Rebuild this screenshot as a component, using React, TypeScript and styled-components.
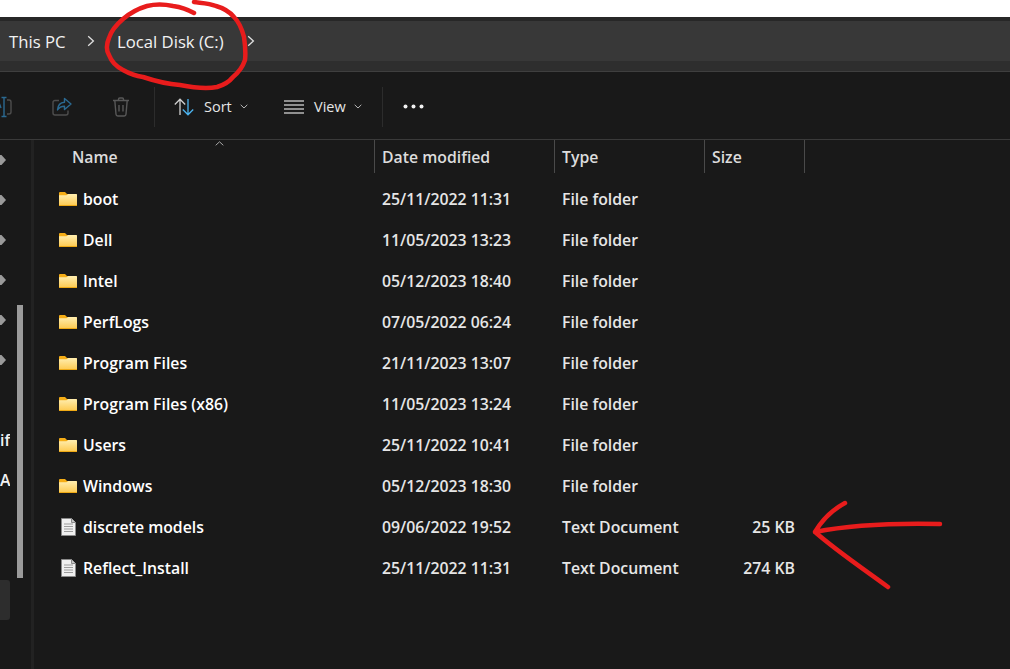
import React from 'react';
import styled, { createGlobalStyle } from 'styled-components';

const GlobalStyle = createGlobalStyle`
  html, body {
    margin: 0;
    background: #ffffff;
    overflow: hidden;
  }
`;

// Window frame
const Page = styled.div`
  position: relative;
  width: 1010px;
  height: 669px;
  overflow: hidden;
  padding-top: 17px;
  box-sizing: border-box;
  font-family: 'Open Sans', 'Noto Sans', sans-serif;
`;

const Explorer = styled.div`
  height: 652px;
  background: #191919;
  display: flex;
  flex-direction: column;
`;

const TitleEdge = styled.div`
  height: 4px;
  background: #272727;
`;

const AddressBar = styled.div`
  height: 40px;
  background: #383838;
  display: flex;
  align-items: center;
  color: #f2f2f2;
  font-size: 16.7px;
`;

const AddressEdge = styled.div`
  height: 10px;
  background: #2e2e2e;
  border-bottom: 1px solid #3f3f3f;
`;

const Crumb = styled.span<{ $width: number; $left: number }>`
  width: ${(p) => p.$width}px;
  margin-left: ${(p) => p.$left}px;
  white-space: nowrap;
  flex: none;
`;

// Toolbar
const Toolbar = styled.div`
  height: 68px;
  flex: none;
  display: flex;
  align-items: center;
  padding-top: 2px;
  border-bottom: 1px solid #3a3a3a;
  box-sizing: border-box;
  color: #e6e6e6;
  font-size: 14.5px;
`;

const ClippedIcon = styled.div`
  width: 12px;
  height: 24px;
  overflow: hidden;
  display: flex;
  justify-content: flex-end;
  margin-right: 40px;
  flex: none;
`;

const IconSlot = styled.div<{ $right: number }>`
  display: flex;
  align-items: center;
  margin-right: ${(p) => p.$right}px;
  flex: none;
`;

const ToolDivider = styled.div`
  width: 1px;
  height: 40px;
  background: #2c2c2c;
  flex: none;
`;

const MenuButton = styled.div<{ $left: number; $width: number }>`
  display: flex;
  align-items: center;
  margin-left: ${(p) => p.$left}px;
  width: ${(p) => p.$width}px;
  flex: none;
`;

const MenuLabel = styled.span<{ $width: number }>`
  margin-left: 10px;
  width: ${(p) => p.$width}px;
`;

// Body
const Body = styled.div`
  flex: 1;
  display: flex;
  min-height: 0;
`;

const Sidebar = styled.div`
  position: relative;
  width: 31px;
  flex: none;
  border-right: 3px solid #222222;
`;

const SideRow = styled.div<{ $selected?: boolean }>`
  height: 40px;
  width: 10px;
  display: flex;
  align-items: center;
  color: #f2f2f2;
  font-size: 15.8px;
  font-weight: 600;
  overflow: hidden;
  border-radius: 0 3px 3px 0;
  background: ${(p) => (p.$selected ? '#2d2d2d' : 'transparent')};
`;

const SideScroll = styled.div`
  position: absolute;
  left: 17px;
  top: 165px;
  width: 6px;
  height: 273px;
  background: #9b9b9b;
`;

const Main = styled.div`
  flex: 1;
  min-width: 0;
`;

const Columns = styled.div`
  display: grid;
  grid-template-columns: 340px 180px 150px 101px;
`;

const HeaderRow = styled(Columns)`
  height: 33px;
  margin-bottom: 5px;
  color: #dcdcdc;
  font-size: 15.8px;
  font-weight: 600;
`;

const HeaderCell = styled.div<{ $last?: boolean }>`
  position: relative;
  display: flex;
  align-items: center;
  padding-left: 7px;
  border-left: 1px solid #4a4a4a;
  ${(p) => (p.$last ? 'border-right: 1px solid #4a4a4a;' : '')}
`;

const NameHeader = styled.div`
  position: relative;
  display: flex;
  align-items: center;
  padding-left: 38px;
`;

const SortCaret = styled.svg`
  position: absolute;
  left: 181px;
  top: 1px;
`;

const FileRow = styled(Columns)`
  height: 41px;
  align-items: center;
  color: #e6e6e6;
  font-size: 15.8px;
  font-weight: 600;
`;

const NameCell = styled.div`
  display: flex;
  align-items: center;
  padding-left: 25px;
  color: #ffffff;
  white-space: nowrap;
`;

const FileIconSlot = styled.div`
  width: 24px;
  flex: none;
  display: flex;
  align-items: center;
`;

const DateCell = styled.div`
  padding-left: 8px;
  white-space: nowrap;
`;

const SizeCell = styled.div`
  text-align: right;
  padding-right: 10px;
`;

// Hand drawn marks over the screenshot
const Scribble = styled.svg`
  position: absolute;
  left: 0;
  top: 0;
  pointer-events: none;
`;

const Chevron = () => (
  <svg width="8" height="12" viewBox="0 0 8 12" fill="none">
    <path d="M1.2 1.2 6.4 6l-5.2 4.8" stroke="#e0e0e0" strokeWidth="1.3" />
  </svg>
);

const SmallCaret = () => (
  <svg width="8" height="5" viewBox="0 0 8 5" fill="none">
    <path d="M.7.8 4 4 7.3.8" stroke="#b5b5b5" strokeWidth="1" />
  </svg>
);

const SideArrow = () => (
  <svg width="6" height="10" viewBox="0 0 6 10" style={{ flex: 'none' }}>
    <path d="M0 0h1.500L6 5 1.500 10H0z" fill="#9a9a9a" />
  </svg>
);

const RenameIcon = () => (
  <svg width="22" height="24" viewBox="0 0 22 24" fill="none" style={{ flex: 'none' }}>
    <path d="M17 5h2a2 2 0 0 1 2 2v10a2 2 0 0 1-2 2h-2" stroke="#4d4d4d" strokeWidth="1.4" />
    <path d="M14 2.500v19M11.500 2.500h5M11.500 21.500h5" stroke="#2b6a92" strokeWidth="1.4" />
    <path d="M7 16l2.500-7 1.500 4" stroke="#2b6a92" strokeWidth="1.4" />
  </svg>
);

const ShareIcon = () => (
  <svg width="20" height="20" viewBox="0 0 20 20" fill="none">
    <path d="M7 3.500H3a2 2 0 0 0-2 2V16a2 2 0 0 0 2 2h11a2 2 0 0 0 2-2v-2.500" stroke="#4d4d4d" strokeWidth="1.400" />
    <path d="M12.500 1.500 19 7l-6.500 5.500V9.200C9 9.200 7 10.500 5.500 13c.3-4.500 3-7.400 7-7.700z" stroke="#2b6a92" strokeWidth="1.400" strokeLinejoin="round" />
  </svg>
);

const TrashIcon = () => (
  <svg width="18" height="20" viewBox="0 0 18 20" fill="none">
    <path d="M1 3.500h16M6.500 3.500V2.200A1.200 1.200 0 0 1 7.700 1h2.600a1.200 1.200 0 0 1 1.200 1.200v1.300M2.800 3.500 4 17.300A1.800 1.800 0 0 0 5.800 19h6.400a1.800 1.800 0 0 0 1.800-1.700l1.200-13.800M7 8v6.500M11 8v6.500" stroke="#585858" strokeWidth="1.400" />
  </svg>
);

const SortIcon = () => (
  <svg width="20" height="18" viewBox="0 0 20 18" fill="none">
    <path d="M6 17V1.500M.8 6.500 6 1.200l5.200 5.300" stroke="#d0d0d0" strokeWidth="1.300" />
    <path d="M14 1v15.500M8.800 11.500 14 16.800l5.200-5.300" stroke="#4cb4f0" strokeWidth="1.300" />
  </svg>
);

const ViewIcon = () => (
  <svg width="20" height="14" viewBox="0 0 20 14" fill="none">
    <path d="M0 1h20M0 5h20M0 9h20M0 13h20" stroke="#b8b8b8" strokeWidth="1.300" />
  </svg>
);

const MoreIcon = () => (
  <svg width="21" height="5" viewBox="0 0 21 5">
    <circle cx="2.500" cy="2.500" r="2" fill="#f2f2f2" />
    <circle cx="10.500" cy="2.500" r="2" fill="#f2f2f2" />
    <circle cx="18.500" cy="2.500" r="2" fill="#f2f2f2" />
  </svg>
);

const FolderIcon = () => (
  <svg width="18" height="14" viewBox="0 0 18 14">
    <defs>
      <linearGradient id="folderBody" x1="0" y1="0" x2="0" y2="1">
        <stop offset="0" stopColor="#ffeeb0" />
        <stop offset="1" stopColor="#fdc94e" />
      </linearGradient>
    </defs>
    <path d="M0 1a1 1 0 0 1 1-1h5l2 2h9a1 1 0 0 1 1 1v3H0z" fill="#f5ad16" />
    <path d="M0 3.300h7.500L9.200 2H17a1 1 0 0 1 1 1v10a1 1 0 0 1-1 1H1a1 1 0 0 1-1-1z" fill="url(#folderBody)" />
    <rect x="0" y="13" width="18" height="1" fill="#eea915" />
  </svg>
);

const DocIcon = () => (
  <svg width="15" height="18" viewBox="0 0 15 18" style={{ marginLeft: 2 }}>
    <path d="M.5.500h10L14.500 4.500v13H.500z" fill="#f0f0f0" stroke="#8a8a8a" />
    <path d="M10.500.500v4h4" fill="#c8c8c8" stroke="#8a8a8a" />
    <path d="M3 6h9M3 8.500h9M3 11h9M3 13.500h9" stroke="#9c9c9c" />
  </svg>
);

const files = [
  { name: 'boot', date: '25/11/2022 11:31', type: 'File folder', size: '' },
  { name: 'Dell', date: '11/05/2023 13:23', type: 'File folder', size: '' },
  { name: 'Intel', date: '05/12/2023 18:40', type: 'File folder', size: '' },
  { name: 'PerfLogs', date: '07/05/2022 06:24', type: 'File folder', size: '' },
  { name: 'Program Files', date: '21/11/2023 13:07', type: 'File folder', size: '' },
  { name: 'Program Files (x86)', date: '11/05/2023 13:24', type: 'File folder', size: '' },
  { name: 'Users', date: '25/11/2022 10:41', type: 'File folder', size: '' },
  { name: 'Windows', date: '05/12/2023 18:30', type: 'File folder', size: '' },
  { name: 'discrete models', date: '09/06/2022 19:52', type: 'Text Document', size: '25 KB' },
  { name: 'Reflect_Install', date: '25/11/2022 11:31', type: 'Text Document', size: '274 KB' },
];

const sideRows = [
  { arrow: true },
  { arrow: true },
  { arrow: true },
  { arrow: true },
  { arrow: true },
  { arrow: true },
  {},
  { text: 'if' },
  { text: 'A' },
  {},
  {},
  { selected: true },
];

const App: React.FC = () => (
  <Page>
    <GlobalStyle />
    <Explorer>
      <TitleEdge />
      <AddressBar>
        <Crumb $left={9} $width={78}>This PC</Crumb>
        <Chevron />
        <Crumb $left={22} $width={130}>Local Disk (C:)</Crumb>
        <Chevron />
      </AddressBar>
      <AddressEdge />
      <Toolbar>
        <ClippedIcon><RenameIcon /></ClippedIcon>
        <IconSlot $right={40}><ShareIcon /></IconSlot>
        <IconSlot $right={24}><TrashIcon /></IconSlot>
        <ToolDivider />
        <MenuButton $left={19} $width={110}>
          <SortIcon />
          <MenuLabel $width={36}>Sort</MenuLabel>
          <SmallCaret />
        </MenuButton>
        <MenuButton $left={0} $width={98}>
          <ViewIcon />
          <MenuLabel $width={40}>View</MenuLabel>
          <SmallCaret />
        </MenuButton>
        <ToolDivider />
        <MenuButton $left={20} $width={21}>
          <MoreIcon />
        </MenuButton>
      </Toolbar>
      <Body>
        <Sidebar>
          {sideRows.map((row, index) => (
            <SideRow key={index} $selected={row.selected}>
              {row.arrow && <SideArrow />}
              {row.text}
            </SideRow>
          ))}
          <SideScroll />
        </Sidebar>
        <Main>
          <HeaderRow>
            <NameHeader>
              Name
              <SortCaret width="9" height="5" viewBox="0 0 9 5" fill="none">
                <path d="M.7 4.300 4.500.8l3.800 3.500" stroke="#a8a8a8" strokeWidth="1" />
              </SortCaret>
            </NameHeader>
            <HeaderCell>Date modified</HeaderCell>
            <HeaderCell>Type</HeaderCell>
            <HeaderCell $last>Size</HeaderCell>
          </HeaderRow>
          {files.map((file) => (
            <FileRow key={file.name}>
              <NameCell>
                <FileIconSlot>{file.size ? <DocIcon /> : <FolderIcon />}</FileIconSlot>
                {file.name}
              </NameCell>
              <DateCell>{file.date}</DateCell>
              <DateCell>{file.type}</DateCell>
              <SizeCell>{file.size}</SizeCell>
            </FileRow>
          ))}
        </Main>
      </Body>
    </Explorer>
    <Scribble width="1010" height="669" viewBox="0 0 1010 669" fill="none">
      <path
        d="M194 13C187 9 180 7 173 6C164 4 155 4 147 6C137 9 130 13 123 19C116 25 111 31 109 38C106 45 106 50 109 55C112 63 117 67 123 70C130 74 136 76 143 77C155 81 167 84 180 85C195 88 207 89 217 87C224 85 229 82 233 77C239 72 243 66 245 60C246 52 245 44 244 37C242 29 239 22 234 17C229 11 223 8 216 6C209 3 201 3 194 2"
        stroke="#e81c1c"
        strokeWidth="4.500"
        strokeLinecap="round"
      />
      <path
        d="M940 524C895 523 850 525 815 532M845 503C832 510 822 520 815 532C838 552 865 570 888 587"
        stroke="#e81c1c"
        strokeWidth="4.500"
        strokeLinecap="round"
        strokeLinejoin="round"
      />
    </Scribble>
  </Page>
);

export default App;
